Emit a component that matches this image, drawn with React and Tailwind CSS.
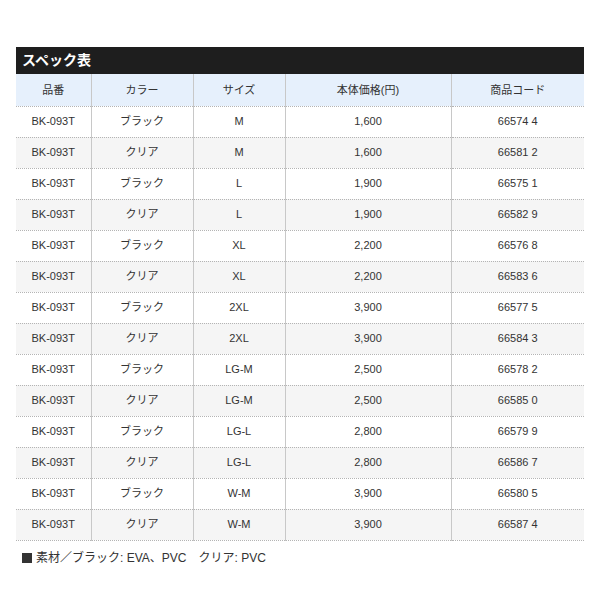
const rows = [
    ["ブラック", "M", "1,600", "66574 4"],
    ["クリア", "M", "1,600", "66581 2"],
    ["ブラック", "L", "1,900", "66575 1"],
    ["クリア", "L", "1,900", "66582 9"],
    ["ブラック", "XL", "2,200", "66576 8"],
    ["クリア", "XL", "2,200", "66583 6"],
    ["ブラック", "2XL", "3,900", "66577 5"],
    ["クリア", "2XL", "3,900", "66584 3"],
    ["ブラック", "LG-M", "2,500", "66578 2"],
    ["クリア", "LG-M", "2,500", "66585 0"],
    ["ブラック", "LG-L", "2,800", "66579 9"],
    ["クリア", "LG-L", "2,800", "66586 7"],
    ["ブラック", "W-M", "3,900", "66580 5"],
    ["クリア", "W-M", "3,900", "66587 4"],
];

export default function App() {
    return (
        <div className="w-[600px] h-[600px] bg-white pt-[47px] px-4 text-[#333] font-['Liberation_Sans','Noto_Sans_CJK_JP',sans-serif]">
            {/* Title bar */}
            <div className="h-[27px] bg-[#1e1e1e] flex items-center px-[6px] text-white text-[14px] font-bold">
                スペック表
            </div>

            <table className="w-[568px] table-fixed border-collapse text-[11px]">
                <colgroup>
                    <col className="w-[75px]" />
                    <col className="w-[102px]" />
                    <col className="w-[92px]" />
                    <col className="w-[166px]" />
                    <col className="w-[133px]" />
                </colgroup>
                <thead>
                    <tr className="h-[32px] bg-[#e6f0fc]">
                        {["品番", "カラー", "サイズ", "本体価格(円)", "商品コード"].map((h, i) => (
                            <th
                                key={h}
                                className={`font-normal text-center border-b border-b-[#b4b4b4] [border-bottom-style:dotted] ${i < 4 ? "border-r border-r-[#c8c8c8] [border-right-style:solid]" : ""}`}
                            >
                                {h}
                            </th>
                        ))}
                    </tr>
                </thead>
                <tbody>
                    {rows.map((r, idx) => (
                        <tr
                            key={idx}
                            className={`h-[31px] ${idx % 2 === 1 ? "bg-[#f5f5f5]" : "bg-white"}`}
                        >
                            {["BK-093T", ...r].map((c, i) => (
                                <td
                                    key={i}
                                    className={`text-center border-b border-b-[#b4b4b4] [border-bottom-style:dotted] ${i < 4 ? "border-r border-r-[#c8c8c8] [border-right-style:solid]" : ""}`}
                                >
                                    {c}
                                </td>
                            ))}
                        </tr>
                    ))}
                </tbody>
            </table>

            <div className="mt-[8px] pl-[6px] flex items-center gap-[4px] text-[12px] text-[#333]">
                <span className="inline-block w-[10px] h-[10px] bg-[#333]" />
                <span>素材／ブラック: EVA、PVC　クリア: PVC</span>
            </div>
        </div>
    );
}
